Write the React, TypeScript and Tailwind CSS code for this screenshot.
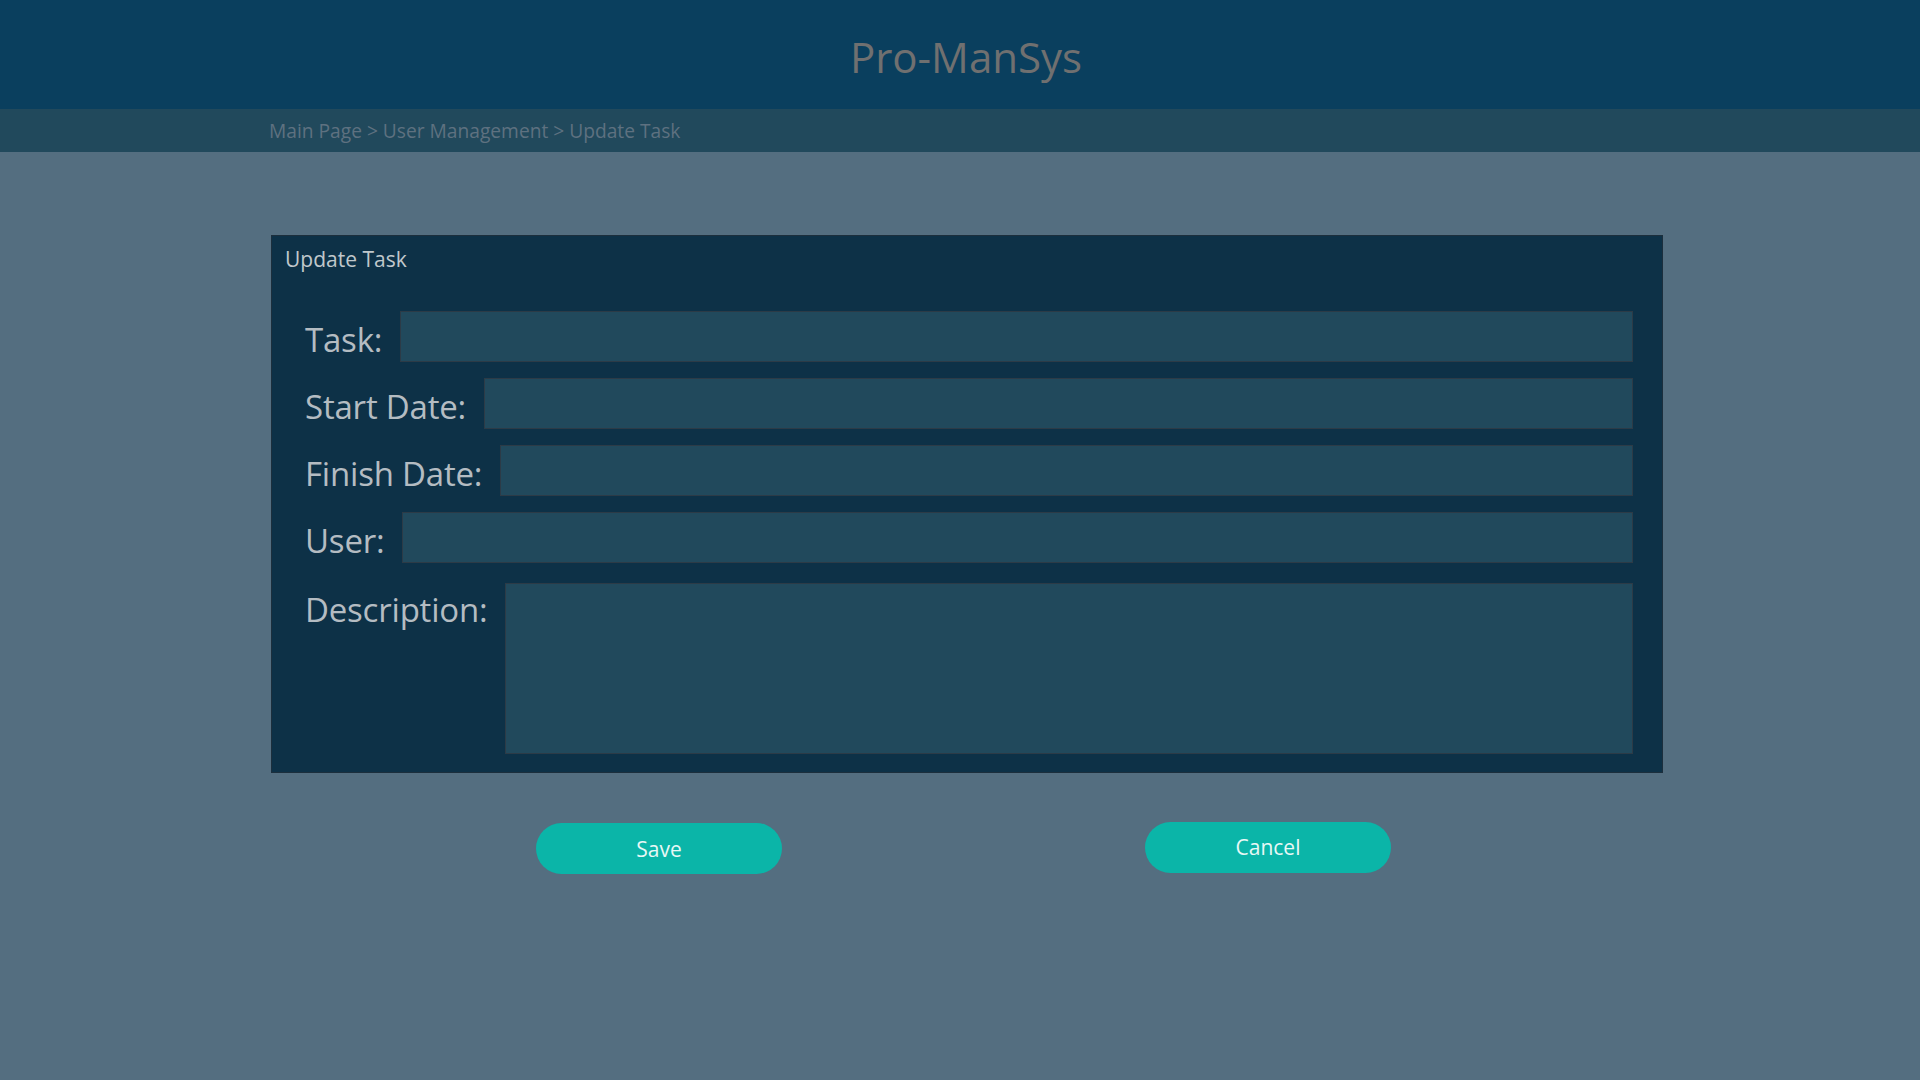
import React from 'react';

interface Field {
  label: string;
  tall?: boolean;
}

const fields: Field[] = [
  { label: 'Task:' },
  { label: 'Start Date:' },
  { label: 'Finish Date:' },
  { label: 'User:' },
  { label: 'Description:', tall: true },
];

export default function App() {
  return (
    <div className="min-h-screen w-full bg-[#546e80] font-['Open_Sans',sans-serif]">
      {/* header */}
      <div className="h-[109px] bg-[#0a3f5e] flex items-center justify-center pt-[4px]">
        <h1 className="text-[42px] text-[#707070] leading-none ml-[12px]">Pro-ManSys</h1>
      </div>
      <div className="h-[43px] bg-[#21495c] flex items-center pl-[269px] pt-[2px]">
        <span className="text-[19.2px] text-[#5e7180]">Main Page &gt; User Management &gt; Update Task</span>
      </div>

      <div className="ml-[271px] w-[1392px] pt-[83px]">
        <div className="bg-[#0d3147] border border-[#1c2f3d] h-[538px]">
          <div className="px-[13px] pt-[8px] text-[21px] leading-[30px] text-[#c0c8cc]">Update Task</div>
          <div className="flex flex-col gap-[16px] pl-[33px] pr-[29px] mt-[37px]">
            {fields.map((f) => (
              <div key={f.label} className={f.tall ? 'flex items-start gap-[18px] mt-[4px]' : 'flex items-center gap-[18px] h-[51px]'}>
                <label className={f.tall ? 'text-[33px] tracking-[-0.2px] leading-[40px] text-[#b4bcc2] pt-[7px]' : 'text-[33px] tracking-[-0.2px] leading-[40px] text-[#b4bcc2] pt-[7px]'}>
                  {f.label}
                </label>
                {f.tall ? (
                  <textarea className="flex-1 h-[171px] bg-[#21495c] border border-[#2c3b47] outline-none resize-none" />
                ) : (
                  <input className="flex-1 h-[51px] bg-[#21495c] border border-[#2c3b47] outline-none" />
                )}
              </div>
            ))}
          </div>
        </div>

        <div className="flex justify-center gap-[363px] mt-[50px] pr-[7px]">
          <button className="w-[246px] h-[51px] rounded-full bg-[#0bb5a8] text-[#e8f8f6] text-[21px] pt-[3px]">Save</button>
          <button className="w-[246px] h-[51px] rounded-full bg-[#0bb5a8] text-[#e8f8f6] text-[21px] -mt-px pt-px">Cancel</button>
        </div>
      </div>
    </div>
  );
}
